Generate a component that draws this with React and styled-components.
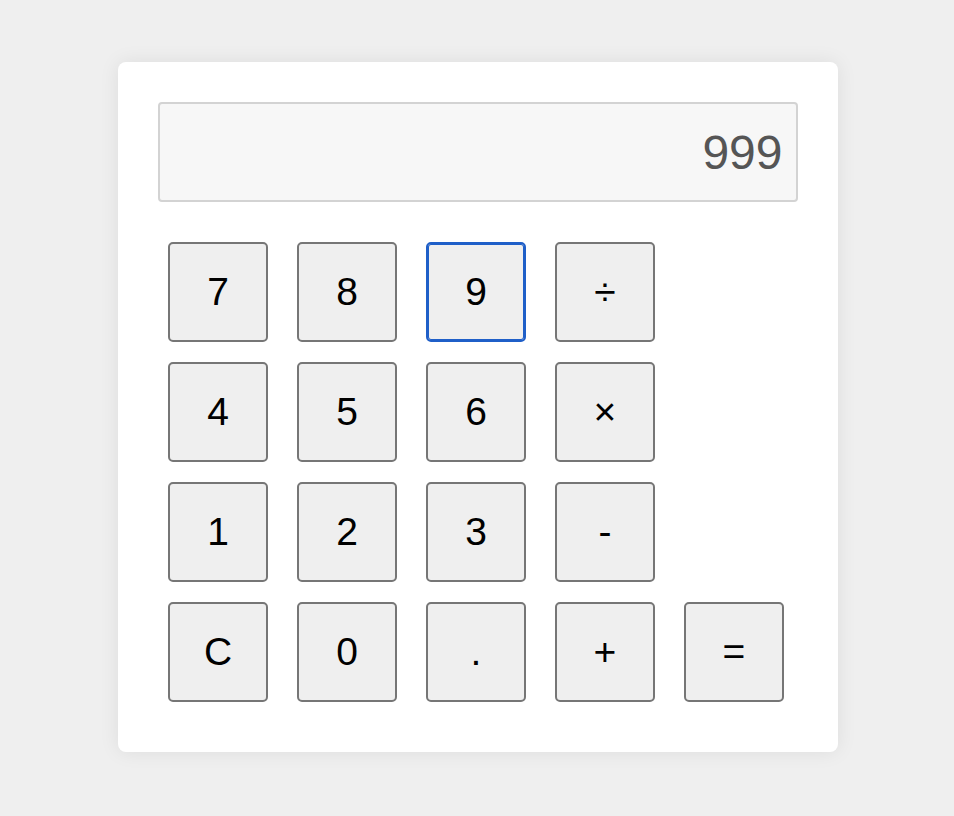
import React, { useState } from 'react';
import styled, { createGlobalStyle } from 'styled-components';

const GlobalStyle = createGlobalStyle`
  body {
    margin: 0;
    background-color: #efefef;
    font-family: 'Liberation Sans', Arial, sans-serif;
  }
`;

const Page = styled.div`
  min-height: 100vh;
  box-sizing: border-box;
  padding: 0 0 2px 1px;
  display: flex;
  align-items: center;
  justify-content: center;
`;

const Card = styled.div`
  width: 720px;
  box-sizing: border-box;
  padding: 40px;
  background-color: #fff;
  border-radius: 8px;
  box-shadow: 0 0 20px rgba(0, 0, 0, 0.08);
`;

const Display = styled.div`
  height: 100px;
  box-sizing: border-box;
  border: 2px solid #d3d3d3;
  border-radius: 4px;
  background-color: #f7f7f7;
  color: #555;
  font-size: 48px;
  display: flex;
  align-items: center;
  justify-content: flex-end;
  padding-right: 13px;
`;

const Keypad = styled.div`
  margin-top: 30px;
  padding: 10px;
  display: grid;
  grid-template-columns: repeat(5, 100px);
  column-gap: 29px;
  row-gap: 20px;
`;

const Key = styled.button`
  width: 100px;
  height: 100px;
  box-sizing: border-box;
  border: 2px solid ${p => (p.$focused ? '#1f5fc8' : '#767676')};
  box-shadow: ${p => (p.$focused ? 'inset 0 0 0 1px #1f5fc8' : 'none')};
  border-radius: 5px;
  background-color: #efefef;
  color: #000;
  font-family: 'Liberation Sans', Arial, sans-serif;
  font-size: 39px;
  padding: 0 0 0 1px;
  cursor: pointer;
  grid-column: ${p => p.$col || 'auto'};
`;

const rows = [
  ['7', '8', '9', '÷'],
  ['4', '5', '6', '×'],
  ['1', '2', '3', '-'],
  ['C', '0', '.', '+', '='],
];

const App = () => {
  const [value] = useState('999');

  return (
    <Page>
      <GlobalStyle />
      <Card>
        <Display>{value}</Display>
        <Keypad>
          {rows.map(row =>
            row.map((k, i) => (
              <Key key={k} $col={i === 0 ? 1 : undefined} $focused={k === '9'}>
                {k}
              </Key>
            ))
          )}
        </Keypad>
      </Card>
    </Page>
  );
};

export default App;
